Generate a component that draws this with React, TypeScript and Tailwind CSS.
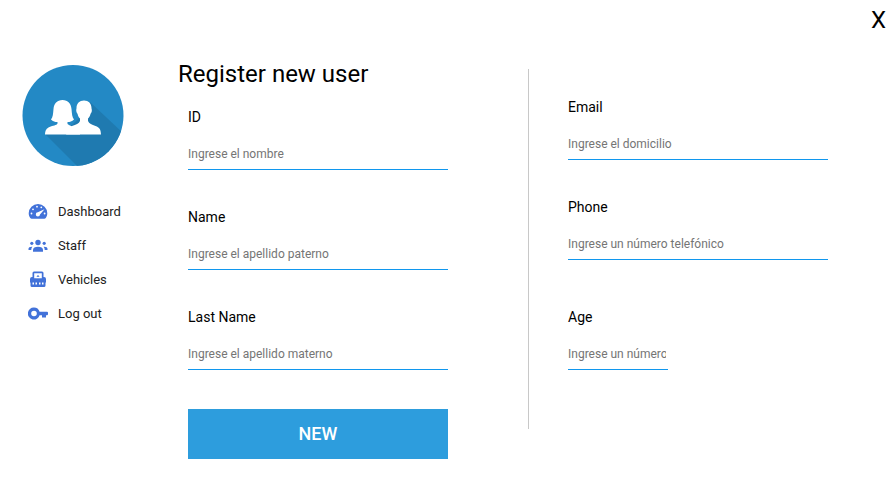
import type { ReactNode } from "react";

function Avatar() {
  return (
    <svg viewBox="0 0 102 102" className="size-[102px]" role="img" aria-label="Users">
      <defs>
        <clipPath id="disc">
          <circle cx="51" cy="51.5" r="50.5" />
        </clipPath>
      </defs>
      <circle cx="51" cy="51.5" r="50.5" fill="#2389c5" />
      <g clipPath="url(#disc)">
        <path d="M23 70 L57 104 L104 104 L104 72 L68 38 L60 51 L50 61 Z" fill="#1f7ab0" />
      </g>
      <g fill="#ffffff" transform="translate(0 1)">
        <path d="M62 35.500C66.500 35.500 69.500 38.500 69.500 43C69.500 44 70 44.500 69.800 46C69.600 47.500 69 48 68.500 49C68 51 67 52.500 66 53.500V56C67 58.500 70 59.500 73.500 61C77.500 62.500 78.700 64 79 69.500H44L50 61C54 59.500 57 58.500 58 56V53.500C57 52.500 56 51 55.600 49C55 48 54.500 47.500 54.300 46C54.100 44.500 54.500 44 54.500 43C54.500 38.500 57.500 35.500 62 35.500Z" />
        <path d="M40.500 35C46 35 49 38.500 49.500 44C50 49 50 52 52 54.500C50 56.500 48 57 45.500 57V59C47.500 61 52 61.500 55 63C57.500 64.500 58 66 58 69.500H23C23.200 65 24.500 63.500 27.500 62C31 60.500 34.500 60.500 35.500 58.500V57C33 57 31 56.500 29 54.500C31 52 31 49 31.500 44C32 38.500 35 35 40.500 35Z" />
      </g>
    </svg>
  );
}

function GaugeIcon() {
  return (
    <svg viewBox="0 0 20 20" className="size-5">
      <path d="M10 2A9.300 9.300 0 0 0 0.700 11.300C0.700 13.300 1.400 15 2.500 16.300C2.800 16.600 3.100 16.700 3.500 16.700H16.500C16.900 16.700 17.200 16.600 17.500 16.300C18.600 15 19.300 13.300 19.300 11.300A9.300 9.300 0 0 0 10 2Z" fill="#4272d9" />
      <g fill="#ffffff">
        <circle cx="3.500" cy="11.500" r="0.900" />
        <circle cx="5" cy="7.300" r="0.900" />
        <circle cx="9" cy="4.700" r="0.900" />
        <circle cx="13.300" cy="5.300" r="0.900" />
        <circle cx="16.600" cy="11.500" r="0.900" />
        <path d="M16.500 7.300L12 12.500A2.100 2.100 0 1 1 9.800 10.300Z" />
      </g>
    </svg>
  );
}

function PeopleIcon() {
  return (
    <svg viewBox="0 0 20 20" className="size-5" fill="#4272d9">
      <circle cx="10" cy="6.500" r="2.700" />
      <circle cx="3.800" cy="7.300" r="1.600" />
      <circle cx="16.200" cy="7.300" r="1.600" />
      <path d="M5 15.700V14C5 11.800 7 10.700 10 10.700S15 11.800 15 14V15.700Z" />
      <path d="M0.500 14V12.800C0.500 11.300 1.700 10.600 4.400 10.700C3.600 11.500 3.300 12.700 3.300 14Z" />
      <path d="M19.500 14V12.800C19.500 11.300 18.300 10.600 15.600 10.700C16.400 11.500 16.700 12.700 16.700 14Z" />
    </svg>
  );
}

function VehicleIcon() {
  return (
    <svg viewBox="0 0 20 20" className="size-5">
      <path d="M6 1.500H14Q15.500 1.500 15.500 3V7H16Q18 7 18 9V12.500H17.500V15.500Q17.500 17 16 17H4Q2.500 17 2.500 15.500V12.500H2V9Q2 7 4 7H4.500V3Q4.500 1.500 6 1.500Z" fill="#4272d9" />
      <path d="M6.200 3.200H13.800V8.300H12V6.800H11V5.500H9V6.800H8V8.300H6.200Z" fill="#ffffff" />
      <path d="M8 6.800H12V8.300H8Z" fill="#ffffff" />
      <path d="M4.500 12.500H6V14.500H4.500ZM7.500 12.500H9V14.500H7.500ZM11 12.500H12.500V14.500H11ZM14 12.500H15.500V14.500H14Z" fill="#ffffff" />
    </svg>
  );
}

function KeyIcon() {
  return (
    <svg viewBox="0 0 20 20" className="size-5" fill="#4272d9">
      <path fillRule="evenodd" d="M6 3.500A6 6 0 1 0 11.600 11.200H14V13.500H18V11.200H19Q20 11.200 20 10V8.700Q20 7.700 19 7.700H11.600A6 6 0 0 0 6 3.500ZM6 6.700A2.800 2.800 0 1 1 6 12.300A2.800 2.800 0 0 1 6 6.700Z" />
    </svg>
  );
}

function NavItem({ icon, text }: { icon: ReactNode; text: string }) {
  return (
    <li>
      <a href="#" className="flex h-[34px] items-center gap-[10px] text-[13px] text-[#222222]">
        {icon}
        <span>{text}</span>
      </a>
    </li>
  );
}

type FieldProps = { id: string; label: string; hint: string; type?: string; short?: boolean };

function Field({ id, label, hint, type = "text", short = false }: FieldProps) {
  return (
    <div className={`flex flex-col gap-3 ${short ? "pt-[10px]" : ""}`}>
      <label htmlFor={id} className="text-sm leading-5">
        {label}
      </label>
      <input
        id={id}
        type={type}
        placeholder={hint}
        className={`h-[31px] border-b border-[#1097ee] bg-transparent text-xs outline-none placeholder:text-[#757575] ${short ? "w-[100px] pr-[2px]" : "w-full"}`}
      />
    </div>
  );
}

export default function App() {
  return (
    <div className="min-h-screen bg-white font-['Roboto',sans-serif] text-black">
      <header className="flex h-10 justify-end px-[9px]">
        <button type="button" aria-label="Close" className="text-2xl leading-10">
          X
        </button>
      </header>
      <div className="flex items-start pt-[18px]">
        <aside className="w-[178px] shrink-0 pt-[6px] pl-[22px]">
          <Avatar />
          <nav className="mt-[29px] pl-[6px]">
            <ul>
              <NavItem icon={<GaugeIcon />} text="Dashboard" />
              <NavItem icon={<PeopleIcon />} text="Staff" />
              <NavItem icon={<VehicleIcon />} text="Vehicles" />
              <NavItem icon={<KeyIcon />} text="Log out" />
            </ul>
          </nav>
        </aside>
        <form className="grid max-w-[760px] flex-1 grid-cols-[7fr_6fr] items-start pr-[67px]" onSubmit={(e) => e.preventDefault()}>
          <section className="pr-20">
            <h1 className="text-2xl leading-8">Register new user</h1>
            <div className="mt-[17px] flex flex-col gap-[37px] pl-[10px]">
              <Field id="user-id" label="ID" hint="Ingrese el nombre" />
              <Field id="name" label="Name" hint="Ingrese el apellido paterno" />
              <Field id="last-name" label="Last Name" hint="Ingrese el apellido materno" />
              <button type="submit" className="mt-[2px] h-[50px] bg-[#2d9ddd] text-lg font-medium text-white">
                NEW
              </button>
            </div>
          </section>
          <section className="mt-[11px] flex min-h-[360px] flex-col gap-[37px] border-l border-[#c8c8c8] pt-7 pl-[39px]">
            <Field id="email" label="Email" hint="Ingrese el domicilio" type="email" />
            <Field id="phone" label="Phone" hint="Ingrese un número telefónico" type="tel" />
            <Field id="age" label="Age" hint="Ingrese un número" short />
          </section>
        </form>
      </div>
    </div>
  );
}
